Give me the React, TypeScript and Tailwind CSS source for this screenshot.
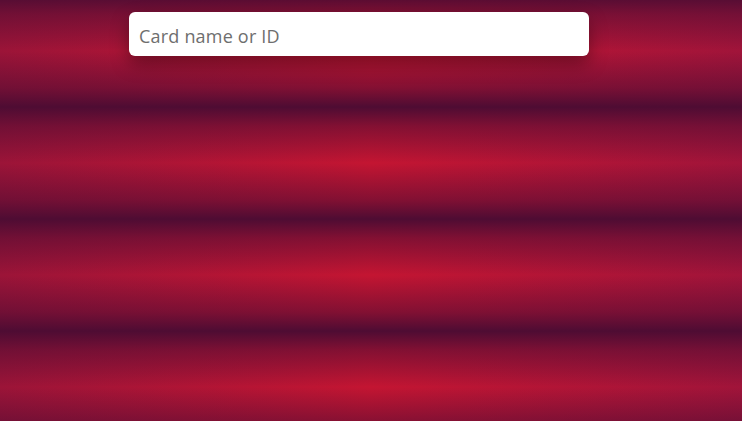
const App = () => {
  return (
    <div className="w-full h-[421px] bg-[image:repeating-linear-gradient(180deg,#4e0c33_-5px,rgba(78,12,51,0.55)_14px,rgba(78,12,51,0)_51px,rgba(78,12,51,0.55)_88px,#4e0c33_107px),linear-gradient(90deg,#9c1438,#c41532_50%,#a1143a)] flex justify-center">
      <div className="w-[460px] mt-3 ml-[-24px]">
        <input
          className="w-full h-11 bg-white rounded-md px-[10px] pt-[4px] text-[18px] tracking-[0.2px] text-[#495057] placeholder:text-[#6e6e6e] shadow-[0_8px_18px_rgba(0,0,0,0.35)] outline-none font-['Open_Sans',sans-serif]"
          placeholder="Card name or ID"
        />
      </div>
    </div>
  )
}

export default App
